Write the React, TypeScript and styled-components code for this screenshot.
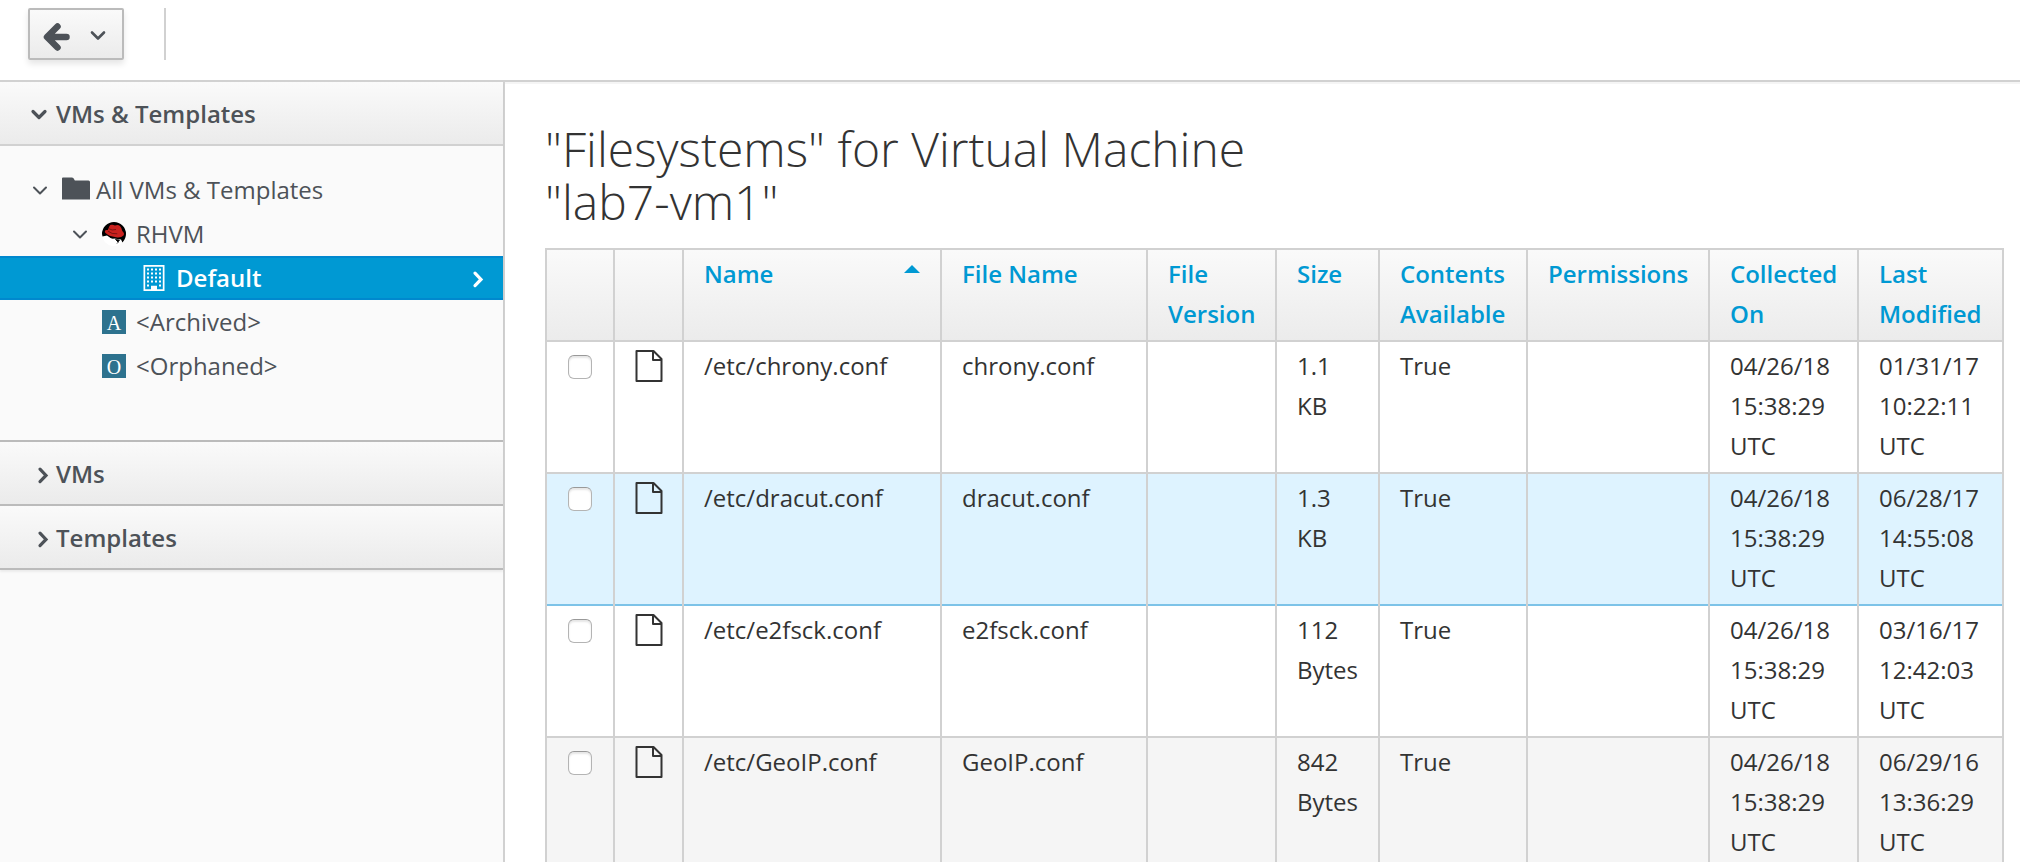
import React from "react";
import styled, { createGlobalStyle, css } from "styled-components";

const GlobalStyle = createGlobalStyle`
  *, *::before, *::after { box-sizing: border-box; }
  body {
    margin: 0;
    background: #fff;
    color: #333;
    font: 400 24px/40px "Open Sans", "Noto Sans", sans-serif;
  }
  #root { height: 100vh; overflow: hidden; }
  svg { display: block; flex: none; }
`;

const chrome = css`
  background: linear-gradient(to bottom, #fafafa 0%, #ebebeb 100%);
`;

const Page = styled.div`
  display: flex;
  flex-direction: column;
  height: 100%;
`;

const Toolbar = styled.header`
  display: flex;
  align-items: flex-start;
  gap: 40px;
  flex: none;
  height: 82px;
  padding: 8px 28px;
  border-bottom: 2px solid #d1d1d1;
`;

const BackButton = styled.button`
  display: flex;
  align-items: center;
  gap: 16px;
  width: 96px;
  height: 52px;
  padding: 2px 12px 0;
  border: 2px solid #bbb;
  border-radius: 2px;
  color: #4d5258;
  box-shadow: 0 4px 6px rgba(3, 3, 3, 0.1);
  ${chrome}
`;

const Divider = styled.div`
  width: 2px;
  height: 52px;
  background: #d1d1d1;
`;

const Body = styled.div`
  display: flex;
  flex: 1;
  min-height: 0;
`;

const Sidebar = styled.nav`
  flex: none;
  width: 505px;
  border-right: 2px solid #d1d1d1;
  background: #fafafa;
  color: #4d5258;
`;

const Accordion = styled.div`
  box-shadow: 0 2px 2px rgba(3, 3, 3, 0.06);
`;

const PanelHeader = styled.button<{ $open?: boolean }>`
  display: flex;
  align-items: center;
  gap: 7px;
  width: 100%;
  height: 64px;
  padding: 2px 29px 0;
  border: 0;
  border-bottom: 2px solid ${(p) => (p.$open ? "#d1d1d1" : "#bbb")};
  color: inherit;
  font: inherit;
  font-weight: 600;
  text-align: left;
  ${chrome}
`;

const Tree = styled.ul`
  margin: 0;
  padding: 22px 0 52px;
  border-bottom: 2px solid #bbb;
  list-style: none;
`;

const Node = styled.li<{ $level: number; $selected?: boolean }>`
  display: flex;
  align-items: center;
  height: 44px;
  padding: 0 19px 0 ${(p) => 30 + p.$level * 40}px;
  line-height: 44px;
  ${(p) =>
    p.$selected &&
    css`
      background: #0099d3;
      box-shadow: inset 0 2px #0088ce, inset 0 -2px #0088ce;
      color: #fff;
      font-weight: 600;
    `}
`;

const Toggle = styled.span`
  display: flex;
  flex: none;
  width: 32px;
`;

const NodeIcon = styled.span`
  display: flex;
  flex: none;
  width: 34px;
`;

const NodeLabel = styled.span`
  flex: 1;
`;

const Main = styled.main`
  flex: 1;
  min-width: 0;
  padding: 40px 16px 0 40px;
  overflow: hidden;
  box-shadow: inset 0 2px #f5f5f5;
`;

const Title = styled.h1`
  max-width: 50%;
  margin: 0 0 20px;
  font-size: 48px;
  font-weight: 300;
  line-height: 53px;
`;

const Grid = styled.table`
  width: 100%;
  table-layout: fixed;
  border-collapse: separate;
  border-spacing: 0;
  border: solid #d1d1d1;
  border-width: 2px 0 0 2px;
`;

const Col = styled.col<{ $width?: number }>`
  width: ${(p) => (p.$width ? `${p.$width}px` : "auto")};
`;

const HeadRow = styled.tr`
  ${chrome}
`;

const cell = css`
  padding: 4px 20px 8px;
  border-right: 2px solid #d1d1d1;
  text-align: left;
  vertical-align: top;
`;

const HeadCell = styled.th`
  ${cell}
  box-shadow: inset 0 -2px #d1d1d1;
  font-weight: 600;
`;

const SortLink = styled.a`
  display: flex;
  justify-content: space-between;
  color: #0099d3;
  text-decoration: none;
`;

const SortArrow = styled.svg`
  margin-top: 11px;
`;

const Row = styled.tr<{ $tone: Tone }>`
  --line: ${(p) => (p.$tone === "hover" ? "#7dc3e8" : "#d1d1d1")};
  background: ${(p) => ({ plain: "#fff", hover: "#def3ff", stripe: "#f5f5f5" })[p.$tone]};
`;

const Cell = styled.td`
  ${cell}
  box-shadow: inset 0 -2px var(--line);
`;

const Checkbox = styled.input`
  display: block;
  appearance: none;
  width: 24px;
  height: 24px;
  margin: 9px 0 0 1px;
  border: 1px solid #b4b4b4;
  border-top-color: #999;
  border-radius: 6px;
  background: #fff;
  box-shadow: inset 0 2px 2px rgba(0, 0, 0, 0.1);
`;

const FileIcon = styled.svg`
  margin-top: 4px;
`;

const AngleDown = ({ weight = 2 }: { weight?: number }) => (
  <svg width="20" height="20" viewBox="0 0 20 20" fill="none" stroke="currentColor" strokeWidth={weight} strokeLinecap="round" strokeLinejoin="round">
    <path d="M4 7.500l6 6 6-6" />
  </svg>
);

const AngleRight = () => (
  <svg width="20" height="20" viewBox="0 0 20 20" fill="none" stroke="currentColor" strokeWidth="3.200" strokeLinecap="round">
    <path d="M11 5.200l6 6.200-6 6.200" />
  </svg>
);

const ArrowLeft = () => (
  <svg width="30" height="34" viewBox="0 0 30 34" fill="none" stroke="currentColor" strokeWidth="6.500" strokeLinecap="round" strokeLinejoin="round">
    <path d="M15.500 8.500L5 19l10.500 10.500M6 19h18.500" />
  </svg>
);

const Folder = () => (
  <svg width="28" height="27" viewBox="0 0 28 27">
    <path d="M0 1.500Q0 .5 1 .5h9q1.500 0 2 1.500l.5 1q.3.500 1 .500H26.500q1.500 0 1.500 1.500V22.500H0z" fill="currentColor" />
  </svg>
);

const RedHat = () => (
  <svg width="24" height="24" viewBox="0 0 24 24">
    <circle cx="12" cy="12" r="12" fill="#fff" />
    <path d="M0 12A12 12 0 0 1 24 12Q24 16.500 20.500 20.500l-1.500-3-3.500-.5-7-1-3.500-2.500-4.500 1z" fill="#000" />
    <path d="M5.800 8L7.500 4Q8.300 2.200 10.500 2.800l2.500.7q3-1.200 5 .5Q20 6.300 20.300 9q2.600 2.300 1.200 4.600-2.500 2.500-7.500 1.700Q6.500 14.300 3.200 10.800 1.800 7.500 5.800 8z" fill="#c9211e" />
    <path d="M6.500 6.500q3.500 2.500 7.500 1M5.800 9q4 3.500 9.500 2.800" stroke="#5c0d0d" strokeWidth=".7" fill="none" />
    <path d="M13.500 17.500l4 .5-1.500 2zM8.500 15.500l3 1M15 21.500l1.500-1.500" stroke="#000" strokeWidth=".8" />
  </svg>
);

const Building = () => (
  <svg width="23" height="26" viewBox="0 0 23 26" fill="currentColor">
    <path fillRule="evenodd" d="M1.500 0h21v26h-21zM3.200 1.700v22.600H9v-3.600h6v3.600h5.800V1.700z" />
    {[4, 8, 12, 16, 20].map((y) =>
      [5, 9, 13, 17]
        .filter((x) => y < 20 || x === 5 || x === 17)
        .map((x) => <rect key={`${x}-${y}`} x={x} y={y - 0.500} width="2" height="2" />)
    )}
  </svg>
);

const LetterBox = styled.span`
  display: block;
  width: 24px;
  height: 24px;
  background: #2d728e;
  color: #fff;
  font: 20px/26px "Liberation Serif", serif;
  text-align: center;
`;

type Tone = "plain" | "hover" | "stripe";

const columns: { label: string; width?: number; sorted?: boolean }[] = [
  { label: "", width: 68 },
  { label: "", width: 69 },
  { label: "Name", sorted: true },
  { label: "File Name", width: 206 },
  { label: "File Version", width: 129 },
  { label: "Size", width: 103 },
  { label: "Contents Available", width: 148 },
  { label: "Permissions", width: 182 },
  { label: "Collected On", width: 149 },
  { label: "Last Modified", width: 145 },
];

const files: { name: string; size: string; modified: string; tone: Tone }[] = [
  { name: "chrony.conf", size: "1.1 KB", modified: "01/31/17 10:22:11 UTC", tone: "plain" },
  { name: "dracut.conf", size: "1.3 KB", modified: "06/28/17 14:55:08 UTC", tone: "hover" },
  { name: "e2fsck.conf", size: "112 Bytes", modified: "03/16/17 12:42:03 UTC", tone: "plain" },
  { name: "GeoIP.conf", size: "842 Bytes", modified: "06/29/16 13:36:29 UTC", tone: "stripe" },
];

export default function App() {
  return (
    <Page>
      <GlobalStyle />
      <Toolbar>
        <BackButton type="button" aria-label="Back">
          <ArrowLeft />
          <AngleDown weight={2.6} />
        </BackButton>
        <Divider />
      </Toolbar>
      <Body>
        <Sidebar>
          <Accordion>
            <PanelHeader type="button" aria-expanded="true" $open>
              <AngleDown weight={3.2} />
              VMs &amp; Templates
            </PanelHeader>
            <Tree>
              <Node $level={0}>
                <Toggle><AngleDown /></Toggle>
                <NodeIcon><Folder /></NodeIcon>
                <NodeLabel>All VMs &amp; Templates</NodeLabel>
              </Node>
              <Node $level={1}>
                <Toggle><AngleDown /></Toggle>
                <NodeIcon><RedHat /></NodeIcon>
                <NodeLabel>RHVM</NodeLabel>
              </Node>
              <Node $level={2} $selected>
                <Toggle />
                <NodeIcon><Building /></NodeIcon>
                <NodeLabel>Default</NodeLabel>
                <AngleRight />
              </Node>
              <Node $level={1}>
                <Toggle />
                <NodeIcon><LetterBox>A</LetterBox></NodeIcon>
                <NodeLabel>&lt;Archived&gt;</NodeLabel>
              </Node>
              <Node $level={1}>
                <Toggle />
                <NodeIcon><LetterBox>O</LetterBox></NodeIcon>
                <NodeLabel>&lt;Orphaned&gt;</NodeLabel>
              </Node>
            </Tree>
            <PanelHeader type="button" aria-expanded="false">
              <AngleRight />
              VMs
            </PanelHeader>
            <PanelHeader type="button" aria-expanded="false">
              <AngleRight />
              Templates
            </PanelHeader>
          </Accordion>
        </Sidebar>
        <Main>
          <Title>"Filesystems" for Virtual Machine "lab7-vm1"</Title>
          <Grid>
            <colgroup>
              {columns.map((c, i) => <Col key={i} $width={c.width} />)}
            </colgroup>
            <thead>
              <HeadRow>
                {columns.map((c, i) => (
                  <HeadCell key={i} scope="col">
                    {c.label && (
                      <SortLink href="#">
                        {c.label}
                        {c.sorted && (
                          <SortArrow width="16" height="8" viewBox="0 0 16 8">
                            <path d="M0 8L8 0l8 8z" fill="#0099d3" />
                          </SortArrow>
                        )}
                      </SortLink>
                    )}
                  </HeadCell>
                ))}
              </HeadRow>
            </thead>
            <tbody>
              {files.map((f) => (
                <Row key={f.name} $tone={f.tone}>
                  <Cell><Checkbox type="checkbox" aria-label={`Select ${f.name}`} /></Cell>
                  <Cell>
                    <FileIcon width="28" height="32" viewBox="0 0 28 32" fill="none" stroke="#333" strokeWidth="2" strokeLinejoin="round">
                      <path d="M1.500 1H18.500l8 8v22H1.500zM18 1v9h8.500" />
                    </FileIcon>
                  </Cell>
                  <Cell>/etc/{f.name}</Cell>
                  <Cell>{f.name}</Cell>
                  <Cell />
                  <Cell>{f.size}</Cell>
                  <Cell>True</Cell>
                  <Cell />
                  <Cell>04/26/18 15:38:29 UTC</Cell>
                  <Cell>{f.modified}</Cell>
                </Row>
              ))}
            </tbody>
          </Grid>
        </Main>
      </Body>
    </Page>
  );
}
